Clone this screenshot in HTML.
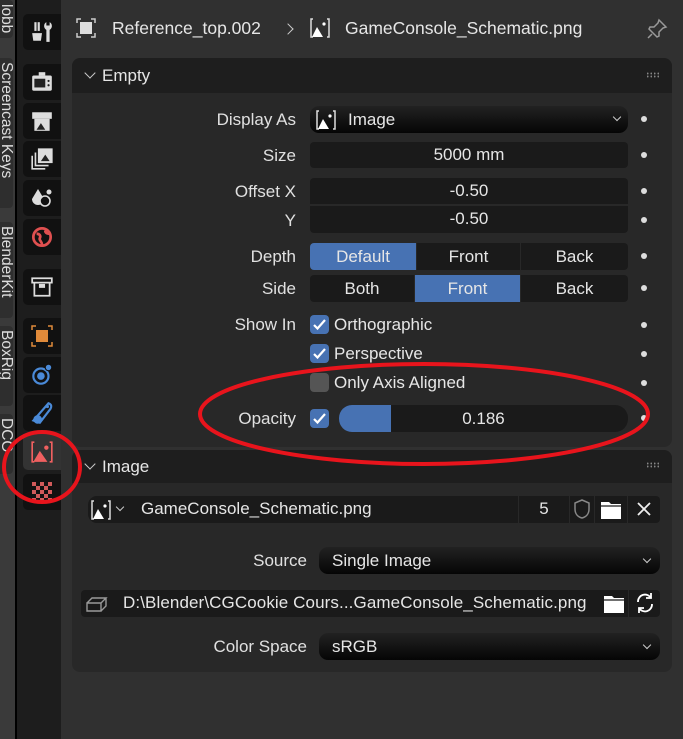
<!DOCTYPE html>
<html><head><meta charset="utf-8"><style>
*{margin:0;padding:0;box-sizing:border-box}
body{width:683px;height:739px;background:#303030;font-family:"Liberation Sans","DejaVu Sans",sans-serif;color:#e6e6e6;font-size:16.5px;position:relative;overflow:hidden}
.a{position:absolute}
.strip{left:0;top:0;width:15px;height:739px;background:#3a3a3a}
.tab{position:absolute;left:0;width:13px;background:#2e2e2e;border-radius:0 4px 4px 0;writing-mode:vertical-rl;font-size:15.5px;color:#ddd;line-height:13px;overflow:hidden;white-space:nowrap;padding-top:4px}
.vline{left:15px;top:0;width:2px;height:739px;background:#000}
.col{left:17px;top:0;width:44px;height:739px;background:#1d1d1d}
.ib{position:absolute;left:23px;width:38px;height:36px;background:#111;border-radius:5px 0 0 5px;display:flex;align-items:center;justify-content:center}
.panel{background:#282828;border-radius:8px}
.ph{background:#1e1e1e;border-radius:8px 8px 0 0;height:35px;display:flex;align-items:center;padding-left:30px;font-size:17px;position:absolute;left:0;right:0;top:0}
.grip{position:absolute;right:12px;top:14px;width:14px;height:6px;background-image:radial-gradient(circle,#888 0.8px,transparent 1px);background-size:3.5px 3px}
.lbl{position:absolute;text-align:right;width:220px;left:76px;font-size:17px;color:#e0e0e0}
.fld{position:absolute;background:#1a1a1a;border-radius:4px;height:26px;line-height:26px;text-align:center;font-size:17px}
.dd{position:absolute;background:linear-gradient(#222,#050505);border-radius:9px;height:27px;line-height:27px;font-size:17px}
.dot{position:absolute;left:641px;width:6px;height:6px;border-radius:3px;background:#ddd}
.cb{position:absolute;width:19px;height:19px;border-radius:4px;background:#4772b3;left:310px}
.cb svg{position:absolute;left:2px;top:2px}
.seg{position:absolute;height:27px;line-height:27px;text-align:center;background:#1a1a1a;font-size:17px}
.chev{position:absolute;width:8px;height:8px;border-right:1.5px solid #ccc;border-bottom:1.5px solid #ccc;transform:rotate(45deg)}
.t{position:absolute;font-size:17px}
</style></head><body>
<div class="a strip"></div>
<div class="tab" style="top:0;height:38px">lobb</div>
<div class="tab" style="top:58px;height:150px">Screencast Keys</div>
<div class="tab" style="top:222px;height:96px">BlenderKit</div>
<div class="tab" style="top:326px;height:80px">BoxRig</div>
<div class="tab" style="top:414px;height:60px">DCO</div>
<div class="a vline"></div>
<div class="a col"></div>
<div class="ib" style="top:14px"><svg width="24" height="24" viewBox="0 0 22 22" fill="#ddd"><rect x="4" y="2" width="2" height="8"/><rect x="7" y="2" width="2" height="8"/><path d="M2 12h9l-1 7H3z"/><path d="M15 2a4 4 0 0 0 0 7v11h3V9a4 4 0 0 0 0-7v3h-3z"/></svg></div>
<div class="ib" style="top:64px"><svg width="24" height="22" viewBox="0 0 22 20"><rect x="2" y="4" width="18" height="14" rx="1.5" fill="#ddd"/><rect x="4" y="7" width="10" height="8" fill="#222"/><rect x="8" y="1" width="6" height="3" fill="#ddd"/><circle cx="17" cy="9" r="1" fill="#222"/><circle cx="17" cy="13" r="1" fill="#222"/></svg></div>
<div class="ib" style="top:103px"><svg width="24" height="22" viewBox="0 0 22 20"><rect x="2" y="2" width="18" height="6" fill="#ddd"/><rect x="4" y="8" width="14" height="11" fill="#ddd"/><path d="M6 18l4-6 4 6z" fill="#222"/></svg></div>
<div class="ib" style="top:141px"><svg width="24" height="24" viewBox="0 0 22 22" fill="none" stroke="#ddd" stroke-width="1.5"><rect x="8" y="2" width="12" height="12" fill="#ddd"/><path d="M5 5v12h12M2 8v12h12"/><path d="M10 13l4-6 4 6z" fill="#222" stroke="none"/></svg></div>
<div class="ib" style="top:180px"><svg width="24" height="22" viewBox="0 0 24 22"><path d="M8 2l6 10a6 6 0 0 1-12 0z" fill="#ddd"/><circle cx="15" cy="14" r="5" fill="#111" stroke="#ddd" stroke-width="1.6"/><circle cx="19" cy="5" r="2.5" fill="#ddd"/></svg></div>
<div class="ib" style="top:219px"><svg width="26" height="26" viewBox="0 0 24 24"><circle cx="12" cy="12" r="8" fill="none" stroke="#e05050" stroke-width="2.5"/><path d="M7 9c3 0 4 2 3 4s2 3 2 6M15 6c0 3 3 3 5 3" stroke="#e05050" stroke-width="2.5" fill="none"/></svg></div>
<div class="ib" style="top:269px"><svg width="24" height="22" viewBox="0 0 22 20" fill="none" stroke="#ddd" stroke-width="1.6"><rect x="2" y="2" width="18" height="4"/><path d="M4 6v12h14V6"/><rect x="9" y="8" width="4" height="2" fill="#ddd"/></svg></div>
<div class="ib" style="top:318px"><svg width="24" height="24" viewBox="0 0 24 24"><rect x="6" y="6" width="12" height="12" fill="#e08a3a"/><path d="M2 6V2h4M18 2h4v4M22 18v4h-4M6 22H2v-4" stroke="#e08a3a" stroke-width="1.5" fill="none"/></svg></div>
<div class="ib" style="top:357px"><svg width="26" height="26" viewBox="0 0 24 24"><circle cx="11" cy="13" r="7" fill="none" stroke="#4a8ad8" stroke-width="2"/><circle cx="11" cy="13" r="3.5" fill="#4a8ad8"/><circle cx="18" cy="5" r="3" fill="#4a8ad8" stroke="#111" stroke-width="1"/></svg></div>
<div class="ib" style="top:395px"><svg width="26" height="28" viewBox="0 0 24 26"><path d="M4 20L18 4c3 1 3 3 2 5L10 22z" fill="none" stroke="#4a8ad8" stroke-width="2"/><circle cx="8" cy="19" r="4" fill="#4a8ad8"/><circle cx="17" cy="7" r="1.5" fill="#4a8ad8"/></svg></div>
<div class="ib" style="top:434px;background:#333"><svg width="24" height="24" viewBox="0 0 22 22"><path d="M4 2H2v18h2M18 2h2v18h-2" stroke="#f06060" stroke-width="1.5" fill="none"/><path d="M3 20l6-10 7 10z" fill="#f06060"/><circle cx="15" cy="7" r="2" fill="#f06060"/></svg></div>
<div class="ib" style="top:474px"><svg width="20" height="20" viewBox="0 0 20 20"><rect width="20" height="20" fill="#d05a5a"/><g fill="#111"><rect x="4" y="0" width="4" height="4"/><rect x="12" y="0" width="4" height="4"/><rect x="0" y="4" width="4" height="4"/><rect x="8" y="4" width="4" height="4"/><rect x="16" y="4" width="4" height="4"/><rect x="4" y="8" width="4" height="4"/><rect x="12" y="8" width="4" height="4"/><rect x="0" y="12" width="4" height="4"/><rect x="8" y="12" width="4" height="4"/><rect x="16" y="12" width="4" height="4"/><rect x="4" y="16" width="4" height="4"/><rect x="12" y="16" width="4" height="4"/></g></svg></div>

<svg class="a" style="left:75px;top:17px" width="22" height="22" viewBox="0 0 22 22"><rect x="5" y="5" width="12" height="12" fill="#ddd"/><path d="M2 6V2h4M16 2h4v4M20 16v4h-4M6 20H2v-4" stroke="#ccc" stroke-width="1.5" fill="none"/></svg>
<div class="a" style="left:112px;top:18px;font-size:17.5px">Reference_top.002</div>
<div class="chev" style="left:284px;top:25px;transform:rotate(-45deg)"></div>
<svg class="a" style="left:310px;top:17px" width="20" height="22" viewBox="0 0 20 22"><path d="M3 2H1v18h2M17 2h2v18h-2" stroke="#ddd" stroke-width="1.5" fill="none"/><path d="M2 20l5-10 6 10z" fill="#fff"/><circle cx="14" cy="7" r="1.6" fill="#fff"/></svg>
<div class="a" style="left:345px;top:18px;font-size:17.5px">GameConsole_Schematic.png</div>
<svg class="a" style="left:645px;top:17px" width="24" height="24" viewBox="0 0 24 24" fill="none" stroke="#999" stroke-width="1.5"><path d="M14 3l7 7-3 1-4 4 0 4-2 1-8-8 1-2 4 0 4-4z"/><path d="M7 17l-4 4"/></svg>

<div class="a panel" style="left:72px;top:58px;width:600px;height:389px">
<div class="ph"><div class="chev" style="left:14px;top:11px"></div>Empty<span class="grip"></span></div>
</div>
<div class="lbl" style="top:110px">Display As</div>
<div class="dd" style="left:310px;top:106px;width:318px"><svg class="a" style="left:6px;top:3px" width="20" height="22" viewBox="0 0 20 22"><path d="M3 2H1v18h2M17 2h2v18h-2" stroke="#ddd" stroke-width="1.5" fill="none"/><path d="M2 20l5-10 6 10z" fill="#fff"/><circle cx="14" cy="7" r="1.6" fill="#fff"/></svg><span style="position:absolute;left:38px">Image</span><div class="chev" style="left:304px;top:8px;width:6px;height:6px"></div></div>
<div class="dot" style="top:116px"></div>
<div class="lbl" style="top:146px">Size</div>
<div class="fld" style="left:310px;top:142px;width:318px">5000 mm</div>
<div class="dot" style="top:152px"></div>
<div class="lbl" style="top:182px">Offset X</div>
<div class="fld" style="left:310px;top:178px;width:318px;border-radius:4px 4px 0 0">-0.50</div>
<div class="dot" style="top:188px"></div>
<div class="lbl" style="top:211px">Y</div>
<div class="fld" style="left:310px;top:206px;width:318px;border-radius:0 0 4px 4px;height:27px">-0.50</div>
<div class="dot" style="top:217px"></div>
<div class="lbl" style="top:247px">Depth</div>
<div class="seg" style="left:310px;top:243px;width:106px;background:#4772b3;border-radius:4px 0 0 4px">Default</div>
<div class="seg" style="left:417px;top:243px;width:103px">Front</div>
<div class="seg" style="left:521px;top:243px;width:107px;border-radius:0 4px 4px 0">Back</div>
<div class="dot" style="top:253px"></div>
<div class="lbl" style="top:279px">Side</div>
<div class="seg" style="left:310px;top:275px;width:104px;border-radius:4px 0 0 4px">Both</div>
<div class="seg" style="left:415px;top:275px;width:105px;background:#4772b3">Front</div>
<div class="seg" style="left:521px;top:275px;width:107px;border-radius:0 4px 4px 0">Back</div>
<div class="dot" style="top:285px"></div>
<div class="lbl" style="top:315px">Show In</div>
<div class="cb" style="top:315px"><svg width="15" height="15" viewBox="0 0 15 15"><path d="M2 8l3.5 3.5L13 3" stroke="#fff" stroke-width="2.2" fill="none"/></svg></div>
<div class="t" style="left:334px;top:315px">Orthographic</div>
<div class="dot" style="top:322px"></div>
<div class="cb" style="top:344px"><svg width="15" height="15" viewBox="0 0 15 15"><path d="M2 8l3.5 3.5L13 3" stroke="#fff" stroke-width="2.2" fill="none"/></svg></div>
<div class="t" style="left:334px;top:344px">Perspective</div>
<div class="dot" style="top:351px"></div>
<div class="cb" style="top:373px;background:#555"></div>
<div class="t" style="left:334px;top:373px">Only Axis Aligned</div>
<div class="dot" style="top:380px"></div>
<div class="lbl" style="top:409px">Opacity</div>
<div class="cb" style="top:409px"><svg width="15" height="15" viewBox="0 0 15 15"><path d="M2 8l3.5 3.5L13 3" stroke="#fff" stroke-width="2.2" fill="none"/></svg></div>
<div class="fld" style="left:339px;top:405px;width:289px;height:27px;line-height:27px;border-radius:13px;overflow:hidden"><div class="a" style="left:0;top:0;width:52px;height:27px;background:#4772b3"></div><span style="position:relative">0.186</span></div>
<div class="dot" style="top:415px"></div>

<div class="a panel" style="left:72px;top:450px;width:600px;height:222px">
<div class="ph" style="height:33px"><div class="chev" style="left:14px;top:10px"></div>Image<span class="grip" style="top:12px"></span></div>
</div>
<div class="a" style="left:88px;top:496px;width:42px;height:27px;background:#1a1a1a;border-radius:9px 0 0 9px"><svg class="a" style="left:3px;top:3px" width="20" height="22" viewBox="0 0 20 22"><path d="M3 2H1v18h2M17 2h2v18h-2" stroke="#ddd" stroke-width="1.5" fill="none"/><path d="M2 20l5-10 6 10z" fill="#fff"/><circle cx="14" cy="7" r="1.6" fill="#fff"/></svg><div class="chev" style="left:29px;top:8px;width:6px;height:6px"></div></div>
<div class="fld" style="left:130px;top:496px;width:388px;height:27px;text-align:left;padding-left:11px;border-radius:0">GameConsole_Schematic.png</div>
<div class="fld" style="left:519px;top:496px;width:50px;height:27px;border-radius:0">5</div>
<div class="fld" style="left:570px;top:496px;width:24px;height:27px;border-radius:0"><svg width="20" height="22" viewBox="0 0 20 22" style="margin-top:2px"><path d="M10 2l7 3v6c0 5-3 8-7 9-4-1-7-4-7-9V5z" fill="none" stroke="#888" stroke-width="1.5"/></svg></div>
<div class="fld" style="left:595px;top:496px;width:32px;height:27px;border-radius:0"><svg width="22" height="20" viewBox="0 0 22 20" style="margin-top:4px"><path d="M1 2h8l2 2h10v15H1z" fill="#fff"/><path d="M1 6h20" stroke="#1a1a1a" stroke-width="1.2"/></svg></div>
<div class="fld" style="left:628px;top:496px;width:32px;height:27px;border-radius:0 4px 4px 0"><svg width="14" height="14" viewBox="0 0 14 14" style="margin-top:6px"><path d="M1 1l12 12M13 1L1 13" stroke="#eee" stroke-width="1.8"/></svg></div>
<div class="lbl" style="left:87px;top:551px">Source</div>
<div class="dd" style="left:319px;top:547px;width:341px"><span style="position:absolute;left:13px">Single Image</span><div class="chev" style="left:325px;top:9px;width:6px;height:6px"></div></div>
<div class="a" style="left:81px;top:590px;width:32px;height:27px;background:#1a1a1a;border-radius:4px 0 0 4px"><svg width="22" height="16" viewBox="0 0 22 16" style="margin:6px 0 0 5px" fill="none" stroke="#999" stroke-width="1.4"><path d="M1 7h14v8H1zM1 7l5-5h14l-5 5M20 2v8l-5 5"/></svg></div>
<div class="fld" style="left:113px;top:590px;width:487px;height:27px;border-radius:0;text-align:left;padding-left:10px;letter-spacing:0.1px">D:\Blender\CGCookie Cours...GameConsole_Schematic.png</div>
<div class="fld" style="left:600px;top:590px;width:28px;height:27px;border-radius:0"><svg width="22" height="20" viewBox="0 0 22 20" style="margin-top:4px"><path d="M1 2h8l2 2h10v15H1z" fill="#fff"/><path d="M1 6h20" stroke="#1a1a1a" stroke-width="1.2"/></svg></div>
<div class="fld" style="left:629px;top:590px;width:31px;height:27px;border-radius:0 4px 4px 0"><svg width="22" height="22" viewBox="0 0 22 22" style="margin-top:2px" fill="none" stroke="#fff" stroke-width="1.8"><path d="M4 10a7 7 0 0 1 13-4M18 12a7 7 0 0 1-13 4"/><path d="M17 1v5h-5M5 21v-5h5"/></svg></div>
<div class="lbl" style="left:87px;top:637px">Color Space</div>
<div class="dd" style="left:319px;top:633px;width:341px"><span style="position:absolute;left:13px">sRGB</span><div class="chev" style="left:325px;top:9px;width:6px;height:6px"></div></div>

<svg class="a" style="left:0;top:0" width="683" height="739"><ellipse cx="424" cy="414" rx="224" ry="50" fill="none" stroke="#e8141c" stroke-width="4"/><ellipse cx="42" cy="467" rx="38" ry="35" fill="none" stroke="#e8141c" stroke-width="4"/></svg>
</body></html>
